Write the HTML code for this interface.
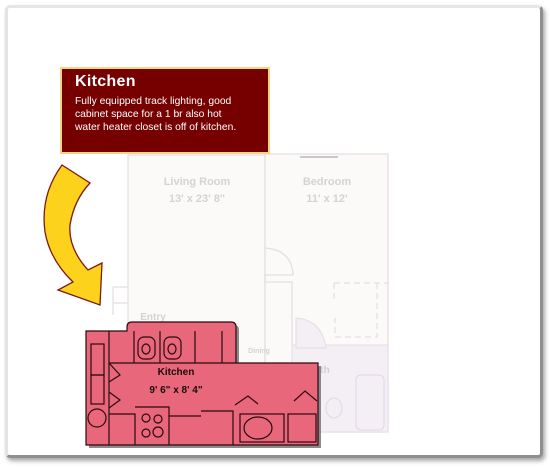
<!DOCTYPE html>
<html><head><meta charset="utf-8"><style>
html,body{margin:0;padding:0;background:#fff;width:550px;height:467px;overflow:hidden}
.frame{position:absolute;left:5px;top:5px;width:532px;height:447px;border-radius:5px;background:#fff;
border-top:3px solid #e6e6e6;border-left:3px solid #e3e3e3;border-right:3px solid #8f8f8f;border-bottom:3px solid #8f8f8f;
box-shadow:2px 3px 4px rgba(0,0,0,.35)}
svg{position:absolute;left:0;top:0}
.tip{position:absolute;left:60px;top:67px;width:206px;height:83px;background:#760000;border:2px solid #f3d58a;color:#fff;font-family:"Liberation Sans",sans-serif}
.tip h1{margin:0;position:absolute;left:13px;top:4px;font-size:16px;font-weight:bold;letter-spacing:.3px}
.tip p{margin:0;position:absolute;left:13px;top:27px;font-size:10.3px;line-height:12.8px;white-space:nowrap}
</style></head><body>
<div class="frame"></div>
<svg width="550" height="467" viewBox="0 0 550 467" font-family="Liberation Sans, sans-serif">
 <g fill="none" stroke="#e4e0de" stroke-width="1.3">
  <rect x="128" y="155" width="137" height="280" fill="#fbfaf9"/>
  <rect x="265" y="154" width="123" height="278" fill="#fbfaf9"/>
  <path d="M265 248 Q292 250 293 275 L265 275 L265 282 L292 282 L292 345" />
  <path d="M334 283 L334 300 M334 283 L388 283 M377 283 L377 337 L335 337 L335 318" stroke-dasharray="6 4"/>
  <path d="M113 287 L128 287 M113 287 L113 315 M113 303 L128 303"/>
 </g>
 <rect x="292" y="345" width="96" height="87" fill="#f4eef5" stroke="#e4dce6"/>
 <path d="M296 318 Q322 320 326 348 L296 348Z" fill="#f4eef5" stroke="#e4dce6"/>
 <rect x="356" y="375" width="28" height="55" rx="5" fill="none" stroke="#e0d6e2"/>
 <ellipse cx="334" cy="408" rx="8" ry="10" fill="none" stroke="#e0d6e2"/>
 <rect x="300" y="156" width="38" height="2" fill="#c8c8c8"/>
 <g fill="#d6d2d0" font-weight="bold" text-anchor="middle">
  <text x="197" y="185" font-size="11">Living Room</text>
  <text x="197" y="202" font-size="11">13' x 23' 8"</text>
  <text x="327" y="185" font-size="11">Bedroom</text>
  <text x="327" y="202" font-size="11">11' x 12'</text>
  <text x="153" y="320" font-size="10" text-anchor="middle">Entry</text>
  <text x="259" y="353" font-size="7">Dining</text>
  <text x="325" y="373" font-size="10">th</text>
 </g>
 <path d="M62 165 L90 183 Q74 200 70 225 Q68 248 88 270 L102 263 L100 305 L58 290 L73 282 Q50 260 45 232 Q40 195 62 165Z" fill="#fcd21c" stroke="#7a1a10" stroke-width="1.3"/>
 <g transform="translate(3,3)" fill="#6e6e6e" opacity=".8">
  <path d="M86 331 L127 331 L127 327 Q127 322 132 322 L231 322 Q236 322 236 327 L236 363 L318 363 L318 445 L86 445Z"/>
 </g>
 <g stroke="#2a0a10" stroke-width="1.2" fill="#e8677b">
  <path d="M86 331 L127 331 L127 327 Q127 322 132 322 L231 322 Q236 322 236 327 L236 363 L318 363 L318 445 L86 445Z"/>
  <g fill="none">
   <path d="M109 331 L109 445 M109 363 L236 363 M134 331 L134 363 M160 331 L160 363 M195 331 L195 363 M222 331 L222 363"/>
   <path d="M109 363 L120 375 L109 382 M109 392 L120 400 L109 408"/>
   <rect x="91" y="344" width="13" height="31"/><rect x="91" y="375" width="13" height="29"/>
   <circle cx="97" cy="418" r="9"/>
   <path d="M109 414 L135 414 L135 445 M135 407 L169 407 L169 445 M169 416 L201 416 M201 411 L233 411 L233 445 M233 414 L233 445"/>
   <rect x="138" y="337" width="17" height="22" rx="6"/><rect x="164" y="337" width="17" height="22" rx="6"/>
   <ellipse cx="146" cy="349" rx="4" ry="5"/><ellipse cx="172" cy="349" rx="4" ry="5"/>
   <circle cx="146" cy="418" r="4"/><circle cx="158" cy="419" r="4"/><circle cx="146" cy="433" r="4"/><circle cx="158" cy="432" r="5"/>
   <path d="M235 405 L248 396 L258 404 M294 401 L305 391 L317 401"/>
   <rect x="240" y="414" width="44" height="28"/><ellipse cx="258" cy="428" rx="14" ry="11"/>
   <rect x="288" y="414" width="28" height="28"/>
  </g>
 </g>
 <g fill="#1a0a0a" font-weight="bold" text-anchor="middle">
  <text x="176" y="375" font-size="10">Kitchen</text>
  <text x="176" y="393" font-size="10">9' 6" x 8' 4"</text>
 </g>
</svg>
<div class="tip"><h1>Kitchen</h1><p>Fully equipped track lighting, good<br>cabinet space for a 1 br also hot<br>water heater closet is off of kitchen.</p></div>
</body></html>
